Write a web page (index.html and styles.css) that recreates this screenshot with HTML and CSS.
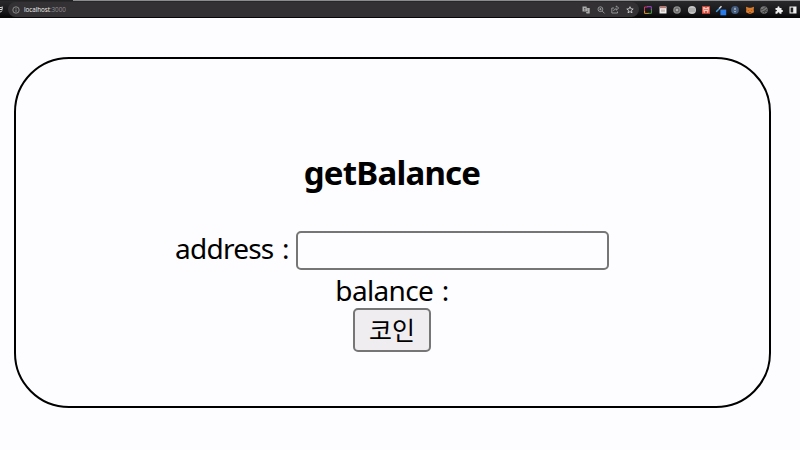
FILE: index.html
```html
<!DOCTYPE html>
<html lang="ko">
<head>
<meta charset="utf-8">
<title>getBalance</title>
<link rel="stylesheet" href="styles.css">
</head>
<body>
<header class="browser">
  <div class="tabs"><span class="tab"></span></div>
  <div class="toolbar">
    <svg class="reload" viewBox="0 0 4 10"><path d="M0 2.5h1.8M2.2 1.5v3H0M0 7q1.5 0 2-1.5" /></svg>
    <div class="omnibox">
      <svg class="info" viewBox="0 0 10 10"><circle cx="5" cy="5" r="3.2"/><path d="M5 4.5v2.3M5 3v.7"/></svg>
      <span class="url">localhost<span class="port">:3000</span></span>
      <div class="actions">
        <svg viewBox="0 0 10 10"><path class="fill" d="M1.5 1.5h4l1 5h-5zM6 3h2.7v5.5H5.5L5 7h1.8z"/><path class="dark" d="M3 3.5h1.5M3 5h1.5"/></svg>
        <svg viewBox="0 0 10 10"><circle cx="4.4" cy="4.2" r="2.4"/><path d="M6.2 6L8.5 8.4M3.3 4.2h2.2M4.4 3.1v2.2"/></svg>
        <svg viewBox="0 0 10 10"><path d="M4 3H1.8v5h5.7V6.5M3.5 6Q4 3.7 6.3 3.7V5.2L8.7 3 6.3 1v1.4"/></svg>
        <svg class="star" viewBox="0 0 10 10"><path d="M5 1.7l.9 2.1 2.3.2-1.8 1.5.6 2.3-2-1.2-2 1.2.6-2.3L1.8 4l2.3-.2z"/></svg>
      </div>
    </div>
    <div class="extensions">
      <svg viewBox="0 0 10 10"><g fill="none" stroke-width="1"><path stroke="#cf3d65" d="M1.5 7V2h3"/><path stroke="#a344d3" d="M4 1.7h4.3v3"/><path stroke="#4f9c49" d="M8.4 4v4.3H5"/><path stroke="#d89835" d="M1.6 6v2.4h4"/></g></svg>
      <svg viewBox="0 0 10 10"><path fill="#eee" d="M1.5 1.5h7v7h-7z"/><path fill="#d9695b" d="M2 2h6v1.2H2z"/><path fill="#c9bcb5" d="M3 4.5h4v2.3H3z"/></svg>
      <svg viewBox="0 0 10 10"><circle cx="5" cy="5" r="3.8" fill="#8b8b8b"/><circle cx="5" cy="5" r="2" fill="none" stroke="#555" stroke-width=".7"/><circle cx="5" cy="5" r=".8" fill="#ddd"/></svg>
      <svg viewBox="0 0 10 10"><circle cx="5" cy="5" r="4" fill="#c4c4c4"/><path stroke="#858585" stroke-width=".7" d="M2 4h6M2 6h6"/></svg>
      <svg viewBox="0 0 10 10"><path fill="#df4f40" d="M1 1.2h8v7.6H1z"/><path fill="#f4c9c2" d="M2 2.5l1-.8L5 3.2l2-1.5 1 .8L7.4 7.5l-1.2.5V6H3.8v2l-1.2-.5z"/><path fill="#c33d30" d="M3.5 4h1v1h-1zM5.5 4h1v1h-1z"/></svg>
      <svg class="picker" viewBox="0 0 14 14"><path stroke="#3c9be6" stroke-width="1.5" d="M2.2 8.8L5.5 5.5"/><path stroke="#ddd" stroke-width="1.5" d="M5.2 5.5L7.5 3.2"/><path fill="#287be8" d="M6.4 6.6h5.8v5.7H6.4z"/></svg>
      <svg viewBox="0 0 10 10"><circle cx="5" cy="5" r="3.9" fill="#405a7d"/><path fill="#c3d0dc" d="M5 2.2L6.4 5 5 7.7 3.6 5z"/><path stroke="#385273" stroke-width=".6" d="M3.3 4.8l1.7 1 1.7-1"/></svg>
      <svg viewBox="0 0 10 10"><path fill="#d77b2f" d="M1 1.7l3 1h2l3-1-.3 3 .3 2.5-2 1-1.3.5H4.3L3 8.2l-2-1 .3-2.5z"/><path fill="#7e421f" d="M2.5 5l1.6.5-.5.6zM7.5 5l-1.6.5.5.6zM4 7.2h2v.9H4z"/></svg>
      <svg viewBox="0 0 10 10"><circle cx="5" cy="5" r="3.8" fill="#777"/><path stroke="#333" stroke-width=".8" fill="none" d="M1.5 5q2 0 3.5-1.5T7.5 2M2.5 7.5Q5 6.5 8.5 4M5 8.5L6 6l2.5.5"/></svg>
      <svg viewBox="0 0 10 10"><path fill="#f1f1f1" d="M1.5 3h2q-.4-1.7 1-1.7T5.5 3h2v2q1.5-.3 1.5 1T7.5 7v1.7H5.7Q5.5 7.2 4.5 7.2T3.3 8.7H1.5V6.5Q3 6.5 3 5.6T1.5 4.7z"/></svg>
      <svg viewBox="0 0 10 10"><path fill="#eee" d="M1.5 1.5h7v7h-7z"/><path fill="#222" d="M2.6 2.6h2.6v4.8H2.6z"/></svg>
    </div>
  </div>
</header>
<main class="card">
  <h1>getBalance</h1>
  <div class="field"><label for="address">address :</label><input id="address" type="text"></div>
  <div class="balance">balance :</div>
  <button type="button">코인</button>
</main>
</body>
</html>
```
FILE: styles.css
```css
* { box-sizing: border-box; }
body {
  margin: 0;
  height: 450px;
  overflow: hidden;
  background: #fdfcfe;
  color: #000;
  font-family: "Noto Sans", "Noto Sans CJK KR", sans-serif;
}
.browser { height: 18px; background: #171719; }
.tabs { height: 1px; background: #8c8c8e; }
.tab { display: block; width: 73px; height: 1px; background: #222224; }
.toolbar {
  display: flex;
  height: 17px;
  align-items: center;
  background: linear-gradient(#29292b, #171719 65%, #050506);
}
.reload { width: 4px; height: 10px; margin-right: 4px; fill: none; stroke: #ddd; stroke-width: 1; }
.omnibox {
  display: flex;
  align-items: center;
  width: 631px;
  height: 15px;
  padding: 0 4px 0 3px;
  border-radius: 8px;
  background: #333134;
}
.info { width: 10px; height: 10px; fill: none; stroke: #a0a0a0; stroke-width: .8; }
.url {
  margin-left: 3px;
  color: #eee;
  font: 6.3px/10px "Open Sans", sans-serif;
  letter-spacing: -.05px;
}
.port { color: #929094; }
.actions {
  display: flex;
  gap: 4.6px;
  margin-left: auto;
}
.actions svg { width: 10px; height: 10px; fill: none; stroke: #aaa; stroke-width: .8; }
.actions .fill { fill: #aaa; stroke: none; }
.actions .dark { stroke: #444; }
.actions .star { stroke: #ddd; }
.extensions { display: flex; align-items: center; gap: 4.55px; margin-left: 4px; }
.extensions svg { flex: none; width: 10px; height: 10px; }
.extensions .picker { width: 14px; height: 14px; margin: 0 -2px; }
.card {
  display: flex;
  flex-direction: column;
  align-items: center;
  width: 757px;
  height: 351px;
  margin: 39px 0 0 14px;
  padding: 92px 1px 0 0;
  border: 2px solid #000;
  border-radius: 55px;
}
h1 {
  margin: 0;
  font-size: 33px;
  font-weight: 700;
  line-height: 43px;
  letter-spacing: -.8px;
}
.field {
  display: flex;
  align-items: center;
  height: 40px;
  margin-top: 36px;
  font-size: 28px;
  letter-spacing: -.75px;
  word-spacing: 2px;
}
.field label { width: 121px; height: 40px; line-height: 36px; white-space: nowrap; }
.field input {
  width: 313px;
  height: 39px;
  border: 2px solid #767676;
  border-radius: 5px;
  background: #fdfcfe;
  outline: none;
}
.balance {
  height: 38px;
  margin-top: 4px;
  font-size: 28px;
  line-height: 32px;
  letter-spacing: -.65px;
  word-spacing: 2px;
}
button {
  width: 78px;
  height: 44px;
  margin-top: -4px;
  padding: 0;
  border: 2px solid #767676;
  border-radius: 5px;
  background: #efedef;
  color: #000;
  font: 400 25px/36px "Noto Sans CJK KR", sans-serif;
}
button { padding-bottom: 3px; }
```
